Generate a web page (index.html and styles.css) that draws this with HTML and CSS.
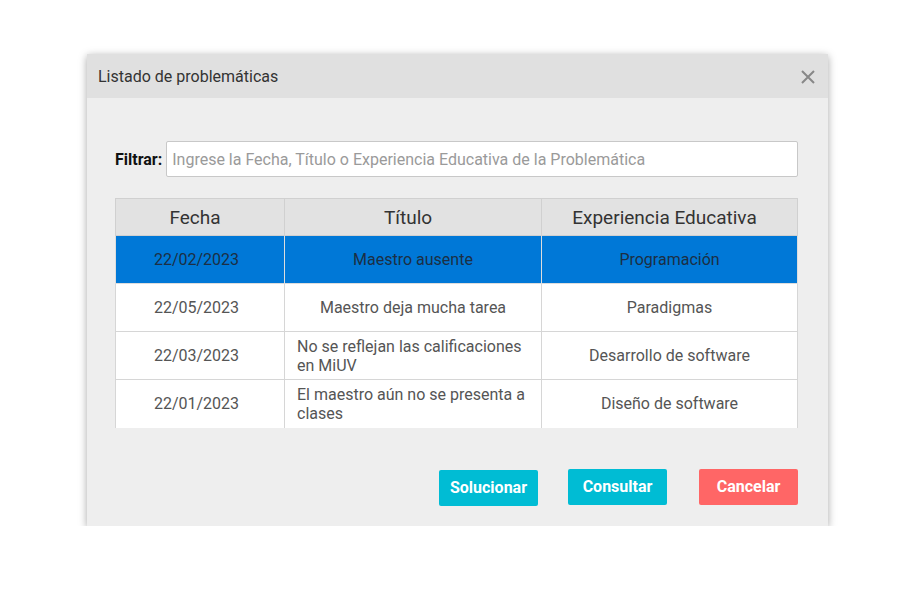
FILE: index.html
```html
<!DOCTYPE html>
<html lang="es">
<head>
<meta charset="utf-8">
<title>Listado de problemáticas</title>
<link rel="stylesheet" href="styles.css">
</head>
<body>
<div class="dialog">
  <div class="dialog-header">
    <span class="dialog-title">Listado de problemáticas</span>
    <button class="close" aria-label="Cerrar">
      <svg width="16" height="16" viewBox="0 0 16 16"><path d="M2 2 L14 14 M14 2 L2 14" stroke="#888" stroke-width="2" fill="none"/></svg>
    </button>
  </div>
  <div class="dialog-body">
    <div class="filter">
      <label class="filter-label">Filtrar:</label>
      <input class="filter-input" type="text" placeholder="Ingrese la Fecha, Título o Experiencia Educativa de la Problemática">
    </div>
    <table class="grid">
      <thead>
        <tr><th class="c1">Fecha</th><th class="c2">Título</th><th class="c3">Experiencia Educativa</th></tr>
      </thead>
      <tbody>
        <tr class="selected"><td class="date">22/02/2023</td><td>Maestro ausente</td><td>Programación</td></tr>
        <tr><td class="date">22/05/2023</td><td>Maestro deja mucha tarea</td><td>Paradigmas</td></tr>
        <tr><td class="date">22/03/2023</td><td class="left">No se reflejan las calificaciones en MiUV</td><td>Desarrollo de software</td></tr>
        <tr><td class="date">22/01/2023</td><td class="left">El maestro aún no se presenta a clases</td><td>Diseño de software</td></tr>
      </tbody>
    </table>
    <div class="actions">
      <button class="btn btn-info low">Solucionar</button>
      <button class="btn btn-info">Consultar</button>
      <button class="btn btn-danger">Cancelar</button>
    </div>
  </div>
</div>
</body>
</html>
```
FILE: styles.css
```css
html, body {
  margin: 0;
  background: #ffffff;
  font-family: Roboto, "Liberation Sans", sans-serif;
}
body {
  padding: 54px 0 0 87px;
}
.dialog {
  width: 741px;
  height: 472px;
  background: #eeeeee;
  box-shadow: 0 2px 8px rgba(0,0,0,0.35);
  display: flex;
  flex-direction: column;
}
.dialog-header {
  background: #e0e0e0;
  display: flex;
  align-items: center;
  justify-content: space-between;
  padding: 1px 12px 0 11px;
  box-sizing: border-box;
  height: 44px;
}
.dialog-title {
  font-size: 16px;
  color: #333333;
}
.close {
  border: 0;
  background: none;
  padding: 0;
  width: 16px;
  height: 16px;
  display: flex;
}
.dialog-body {
  padding: 43px 30px 0 28px;
  display: flex;
  flex-direction: column;
}
.filter {
  display: flex;
  align-items: center;
  gap: 4px;
}
.filter-label {
  font-weight: bold;
  font-size: 16px;
  color: #111;
}
.filter-input {
  flex: 1;
  height: 36px;
  box-sizing: border-box;
  border: 1px solid #c8c8c8;
  border-radius: 2px;
  background: #fff;
  font-family: Roboto, "Liberation Sans", sans-serif;
  font-size: 16px;
  padding: 0 5px;
  color: #333;
  outline: none;
}
.filter-input::placeholder {
  color: #9a9a9a;
}
.grid {
  margin-top: 21px;
  border-collapse: collapse;
  width: 682px;
  table-layout: fixed;
}
.grid th {
  height: 37px;
  background: #e2e2e2;
  font-weight: normal;
  font-size: 19px;
  color: #333;
  border: 1px solid #d0d0d0;
  box-sizing: border-box;
  padding: 0 10px 0 0;
}
.c1 { width: 169px; }
.c2 { width: 257px; }
.c3 { width: 256px; }
.grid td {
  height: 48px;
  box-sizing: border-box;
  background: #fff;
  border: 1px solid #d6d6d6;
  font-size: 16px;
  color: #555;
  text-align: center;
  padding: 0 12px;
  line-height: 19px;
}
.grid td.date {
  padding: 0 18px 0 11px;
}
.grid tbody tr:last-child td {
  border-bottom: 0;
}
.grid td.left {
  text-align: left;
}
.grid tr.selected td {
  background: #0078d7;
  color: #1c2f44;
  border-color: #dddddd;
}
.actions {
  display: flex;
  justify-content: flex-end;
  gap: 30px;
  margin-top: 41px;
  align-items: flex-start;
}
.btn {
  width: 99px;
  height: 36px;
  border: 0;
  border-radius: 2px;
  color: #fff;
  font-weight: bold;
  font-size: 16px;
  font-family: Roboto, "Liberation Sans", sans-serif;
  padding: 0;
}
.low { margin-top: 1px; }
.btn-danger { margin-left: 2px; }
.btn-info { background: #00bcd4; }
.btn-danger { background: #ff6666; }
```
